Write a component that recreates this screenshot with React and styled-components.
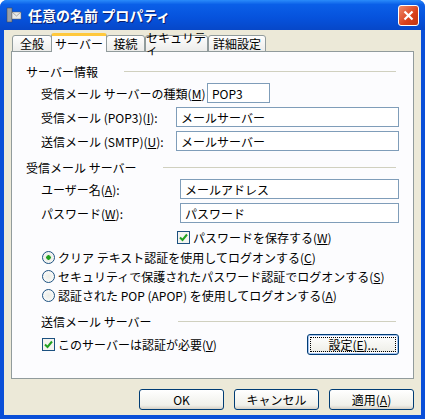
import React from 'react';
import styled, { createGlobalStyle } from 'styled-components';

const Global = createGlobalStyle`
  html, body { margin: 0; padding: 0; background: #fff; }
  body { font-family: "Noto Sans CJK JP", "DejaVu Sans", sans-serif; font-size: 12px; color: #000; }
`;

const Win = styled.div`
  width: 425px; height: 419px; box-sizing: border-box;
  background: #0a4fd8; border-radius: 7px 7px 0 0;
  display: flex; flex-direction: column; overflow: hidden;
`;
const TitleBar = styled.div`
  height: 30px; flex: none; display: flex; align-items: center; padding: 0 6px;
  background: linear-gradient(#2a8bfa 0%, #0a5fe8 15%, #0652dc 60%, #0647c8 100%);
  color: #fff; font-weight: bold; font-size: 14px; gap: 6px;
  text-shadow: 1px 1px #0a1f6e;
`;
const TitleText = styled.div` flex: 1; `;
const Close = styled.div`
  width: 21px; height: 21px; border: 1px solid #fff; border-radius: 3px; box-sizing: border-box;
  background: linear-gradient(135deg, #f08a6a, #d8401c 60%, #c23510);
  display: flex; align-items: center; justify-content: center;
`;
const Client = styled.div`
  flex: 1; margin: 0 4px 4px; background: #ece9d8;
  display: flex; flex-direction: column; padding: 3px 7px 0;
`;
const Tabs = styled.div` display: flex; align-items: flex-end; height: 19px; padding-left: 1px; `;
const Tab = styled.div`
  width: ${p => p.$w}px; height: ${p => p.$active ? 19 : 17}px; box-sizing: border-box;
  margin: 0 ${p => p.$active ? -1 : 0}px; z-index: ${p => p.$active ? 2 : 1};
  background: ${p => p.$active ? '#fcfcfe' : 'linear-gradient(#fefefe, #ececea)'};
  border: 1px solid #919b9c; border-bottom: ${p => p.$active ? 'none' : '1px solid #919b9c'};
  border-top: ${p => p.$active ? '3px solid #ffc83c' : '1px solid #919b9c'};
  border-radius: 3px 3px 0 0; display: flex; align-items: center; justify-content: center; line-height: 1;
  font-size: 12px;
`;
const Panel = styled.div`
  height: 328px; margin-top: -1px; background: #fcfcfe; border: 1px solid #919b9c;
  display: flex; flex-direction: column; padding: 9px 14px 0 14px; box-sizing: border-box;
`;
const Section = styled.div`
  height: 20px; display: flex; align-items: center; gap: 26px; margin-right: 3px;
  &::after { content: ''; flex: 1; height: 1px; background: #d0d0bf; }
`;
const Row = styled.div`
  height: 20px; display: flex; align-items: center; margin-top: ${p => p.$mt ?? 4}px; padding-left: ${p => p.$pl || 15}px;
`;
const Label = styled.div` width: ${p => p.$w}px; flex: none; `;
const Input = styled.div`
  width: ${p => p.$w || 223}px; height: 20px; box-sizing: border-box; border: 1px solid #7f9db9;
  background: #fff; display: flex; align-items: center; padding-left: 4px;
`;
const Check = styled.span`
  width: 13px; height: 13px; box-sizing: border-box; border: 1px solid #1c5180; background: #f4f4f0;
  display: inline-flex; align-items: center; justify-content: center; margin-right: 3px; flex: none;
`;
const Radio = styled.span`
  width: 13px; height: 13px; box-sizing: border-box; border: 1px solid #1c5180; border-radius: 50%;
  background: radial-gradient(circle, ${p => p.$on ? '#21a121 0 2px, #ebece6 2.5px' : '#ebece6 0'}, #fff);
  display: inline-block; margin-right: 3px; flex: none;
`;
const U = styled.span` text-decoration: underline; `;
const Button = styled.div`
  width: ${p => p.$w || 85}px; height: 21px; box-sizing: border-box; border: 1px solid #003c74; border-radius: 3px;
  background: linear-gradient(#fff, #f0f0ea 80%, #d6d0c5); display: flex; align-items: center; justify-content: center;
  box-shadow: ${p => p.$focus ? 'inset 0 0 0 1px #a7c4f0, inset 0 0 0 2px #fff' : 'none'};
  outline: ${p => p.$focus ? '1px dotted #000' : 'none'}; outline-offset: -4px;
`;
const Footer = styled.div` display: flex; justify-content: flex-end; gap: 10px; margin-top: 10px; `;

const Tick = () => (
  <svg width="9" height="9" viewBox="0 0 9 9"><path d="M1 4.5 L3.5 7 L8 1.5" stroke="#21a121" strokeWidth="2" fill="none" /></svg>
);

export default function App() {
  return (
    <>
      <Global />
      <Win>
        <TitleBar>
          <svg width="16" height="16" viewBox="0 0 16 16">
            <rect x="1" y="1" width="5" height="14" fill="#9aa0a8" stroke="#444" strokeWidth="0.5" />
            <rect x="6" y="5" width="9" height="7" fill="#e8e8e8" stroke="#666" strokeWidth="0.5" />
            <path d="M6 5 L10.5 9 L15 5" stroke="#666" strokeWidth="0.5" fill="none" />
          </svg>
          <TitleText>任意の名前 プロパティ</TitleText>
          <Close>
            <svg width="11" height="11" viewBox="0 0 11 11"><path d="M1.5 1.5 L9.5 9.5 M9.5 1.5 L1.5 9.5" stroke="#fff" strokeWidth="2.2" /></svg>
          </Close>
        </TitleBar>
        <Client>
          <Tabs>
            <Tab $w={40}>全般</Tab>
            <Tab $w={56} $active>サーバー</Tab>
            <Tab $w={39}>接続</Tab>
            <Tab $w={63}>セキュリティ</Tab>
            <Tab $w={58}>詳細設定</Tab>
          </Tabs>
          <Panel>
            <Section>サーバー情報</Section>
            <Row $mt={2}><Label $w={166}>受信メール サーバーの種類(<U>M</U>)</Label><Input $w={63}>POP3</Input></Row>
            <Row><Label $w={135}>受信メール (POP3)(<U>I</U>):</Label><Input>メールサーバー</Input></Row>
            <Row><Label $w={135}>送信メール (SMTP)(<U>U</U>):</Label><Input>メールサーバー</Input></Row>
            <Section style={{ marginTop: 6 }}>受信メール サーバー</Section>
            <Row $mt={2}><Label $w={139}>ユーザー名(<U>A</U>):</Label><Input $w={219}>メールアドレス</Input></Row>
            <Row><Label $w={139}>パスワード(<U>W</U>):</Label><Input $w={219}>パスワード</Input></Row>
            <Row $mt={4} $pl={151}><Check><Tick /></Check>パスワードを保存する(<U>W</U>)</Row>
            <Row $mt={1} $pl={16} style={{ height: 19 }}><Radio $on />クリア テキスト認証を使用してログオンする(<U>C</U>)</Row>
            <Row $mt={0} $pl={16} style={{ height: 19 }}><Radio />セキュリティで保護されたパスワード認証でログオンする(<U>S</U>)</Row>
            <Row $mt={0} $pl={16} style={{ height: 19 }}><Radio />認証された POP (APOP) を使用してログオンする(<U>A</U>)</Row>
            <Row $mt={6} $pl={0} as={Section}>送信メール サーバー</Row>
            <Row $mt={3} $pl={16} style={{ justifyContent: 'space-between' }}>
              <span style={{ display: 'flex', alignItems: 'center' }}><Check><Tick /></Check>このサーバーは認証が必要(<U>V</U>)</span>
              <Button $w={92} $focus>設定(<U>E</U>)...</Button>
            </Row>
          </Panel>
          <Footer>
            <Button>OK</Button>
            <Button>キャンセル</Button>
            <Button>適用(<U>A</U>)</Button>
          </Footer>
        </Client>
      </Win>
    </>
  );
}
